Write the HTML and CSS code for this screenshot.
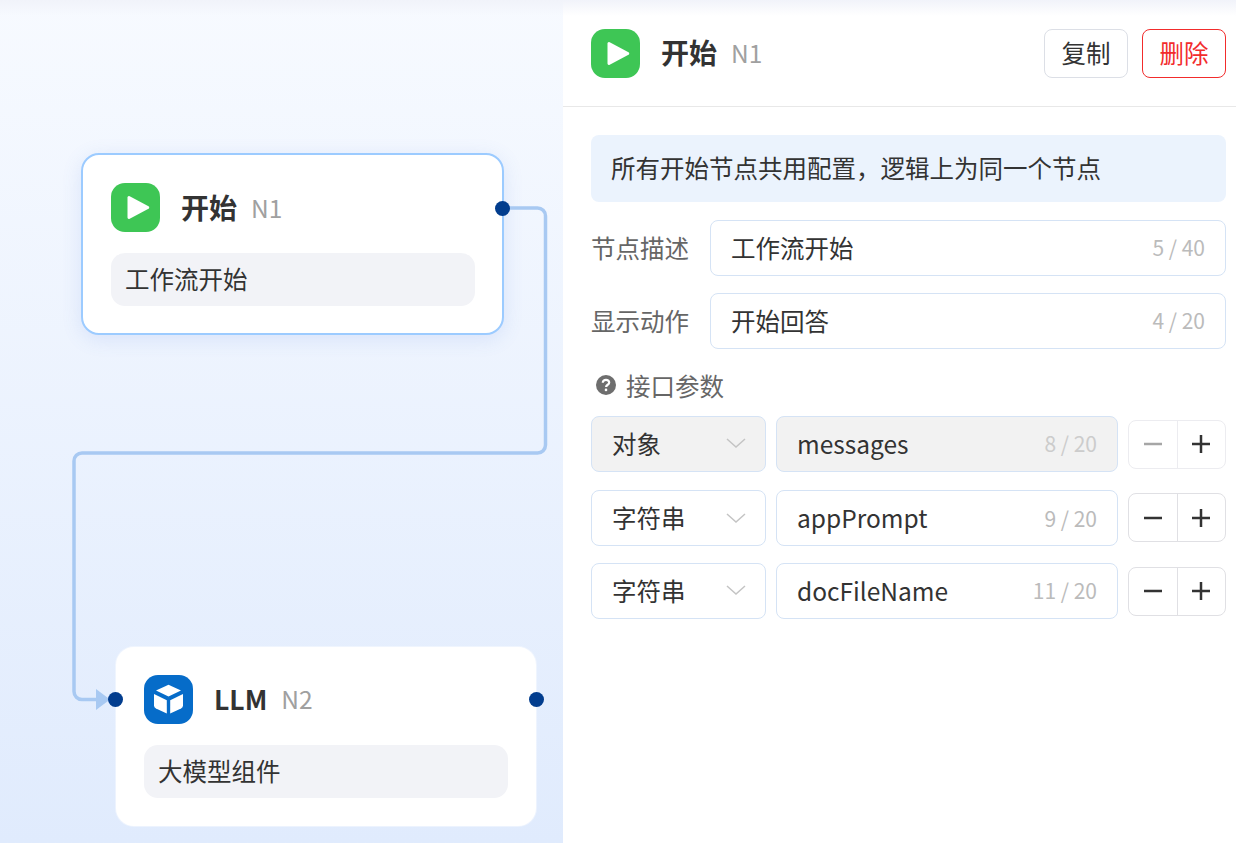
FILE: index.html
```html
<!DOCTYPE html>
<html lang="zh-CN">
<head>
<meta charset="utf-8">
<title>开始 N1</title>
<link rel="stylesheet" href="styles.css">
</head>
<body>
<div class="app">
  <section class="canvas">
    <svg class="edges" width="563" height="843" viewBox="0 0 563 843">
      <path class="edge" d="M503 208H537.500a8 8 0 0 1 8 8V445a8 8 0 0 1-8 8H82a8 8 0 0 0-8 8V691.500a8 8 0 0 0 8 8H98"/>
      <path class="arrow" d="M96 689L110 699.500L96 710Z"/>
    </svg>
    <article class="node node-start">
      <header class="node-head">
        <span class="icon icon-green"><svg width="49" height="49" viewBox="0 0 49 49"><path class="glyph" d="M16.500 14.500a1.500 1.500 0 0 1 2.200-1.300L37.500 23.200a1.500 1.500 0 0 1 0 2.600L18.700 35.800a1.500 1.500 0 0 1-2.200-1.300Z"/></svg></span>
        <h2 class="node-title">开始</h2><span class="node-id">N1</span>
      </header>
      <div class="node-desc">工作流开始</div>
      <span class="port port-right"></span>
    </article>
    <article class="node node-llm">
      <header class="node-head">
        <span class="icon icon-blue"><svg width="49" height="49" viewBox="0 0 49 49"><path class="glyph" d="M24.500 9.800L37 15.500L24.500 21.500L12 15.500Z"/><path class="glyph" d="M10 19L22.800 25.300V38.500L12 33.500Q10 32.500 10 30.500Z"/><path class="glyph" d="M39 19L26.200 25.300V38.500L37 33.500Q39 32.500 39 30.500Z"/></svg></span>
        <h2 class="node-title node-title-latin">LLM</h2><span class="node-id">N2</span>
      </header>
      <div class="node-desc">大模型组件</div>
      <span class="port port-left"></span>
      <span class="port port-right"></span>
    </article>
  </section>
  <aside class="panel">
    <header class="panel-head">
      <span class="icon icon-green"><svg width="49" height="49" viewBox="0 0 49 49"><path class="glyph" d="M16.500 14.500a1.500 1.500 0 0 1 2.200-1.300L37.500 23.200a1.500 1.500 0 0 1 0 2.600L18.700 35.800a1.500 1.500 0 0 1-2.200-1.300Z"/></svg></span>
      <h1 class="node-title">开始</h1><span class="node-id">N1</span>
      <div class="head-actions">
        <button class="btn">复制</button>
        <button class="btn btn-danger">删除</button>
      </div>
    </header>
    <div class="panel-body">
      <p class="notice">所有开始节点共用配置，逻辑上为同一个节点</p>
      <div class="field">
        <label class="field-label">节点描述</label>
        <div class="input grow"><span class="value">工作流开始</span><span class="count">5 / 40</span></div>
      </div>
      <div class="field">
        <label class="field-label">显示动作</label>
        <div class="input grow"><span class="value">开始回答</span><span class="count">4 / 20</span></div>
      </div>
      <div class="section-label">
        <svg width="20" height="20" viewBox="0 0 20 20"><circle class="help-bg" cx="10" cy="10" r="10"/><path class="help-mark" d="M6.800 7.800C6.800 5.900 8.200 4.800 10 4.800C11.900 4.800 13.200 5.900 13.200 7.500C13.200 9.800 10.100 9.700 10.100 12"/><circle class="help-dot" cx="10" cy="14.900" r="1.300"/></svg>
        <span>接口参数</span>
      </div>
      <div class="params">
        <div class="param">
          <div class="input select disabled"><span class="value">对象</span><svg class="chev" width="20" height="10" viewBox="0 0 20 10"><path d="M1 1L10 9L19 1"/></svg></div>
          <div class="input name disabled"><span class="value">messages</span><span class="count">8 / 20</span></div>
          <div class="stepper stepper-muted"><span class="step off"><svg width="20" height="20" viewBox="0 0 20 20"><path d="M1 10H19"/></svg></span><span class="step"><svg width="20" height="20" viewBox="0 0 20 20"><path d="M1 10H19M10 1V19"/></svg></span></div>
        </div>
        <div class="param">
          <div class="input select"><span class="value">字符串</span><svg class="chev" width="20" height="10" viewBox="0 0 20 10"><path d="M1 1L10 9L19 1"/></svg></div>
          <div class="input name"><span class="value">appPrompt</span><span class="count">9 / 20</span></div>
          <div class="stepper"><span class="step"><svg width="20" height="20" viewBox="0 0 20 20"><path d="M1 10H19"/></svg></span><span class="step"><svg width="20" height="20" viewBox="0 0 20 20"><path d="M1 10H19M10 1V19"/></svg></span></div>
        </div>
        <div class="param">
          <div class="input select"><span class="value">字符串</span><svg class="chev" width="20" height="10" viewBox="0 0 20 10"><path d="M1 1L10 9L19 1"/></svg></div>
          <div class="input name"><span class="value">docFileName</span><span class="count">11 / 20</span></div>
          <div class="stepper"><span class="step"><svg width="20" height="20" viewBox="0 0 20 20"><path d="M1 10H19"/></svg></span><span class="step"><svg width="20" height="20" viewBox="0 0 20 20"><path d="M1 10H19M10 1V19"/></svg></span></div>
        </div>
      </div>
    </div>
  </aside>
  <div class="top-shade"></div>
</div>
</body>
</html>
```
FILE: styles.css
```css
* { box-sizing: border-box; }
html, body { margin: 0; height: 100%; }
body {
  font-family: "Noto Sans CJK SC", "Noto Sans", sans-serif;
  color: #333;
  overflow: hidden;
  background: #fff;
}
.app { position: relative; display: flex; width: 1236px; height: 843px; overflow: hidden; }
.top-shade {
  position: absolute; left: 0; right: 0; top: 0; height: 16px;
  background: linear-gradient(#f1f3fa, rgba(255,255,255,0));
  pointer-events: none;
}
.canvas {
  position: relative; flex: 0 0 563px; height: 843px;
  background: linear-gradient(180deg, #f7faff 0%, #e0ebfd 100%);
}
.edges { position: absolute; left: 0; top: 0; z-index: 2; pointer-events: none; }
.edge { fill: none; stroke: #a8c9f2; stroke-width: 3.500; }
.arrow { fill: #a8c9f2; }
.node {
  position: absolute; display: flex; flex-direction: column;
  background: #fff; border-radius: 18px; padding: 28px 28px 0;
}
.node-start {
  left: 81px; top: 153px; width: 423px; height: 182px; padding-right: 27px;
  border: 2px solid #9ccbff;
  box-shadow: 0 4px 20px rgba(80,120,220,.14);
}
.node-llm {
  left: 116px; top: 647px; width: 420px; height: 179px;
  box-shadow: 0 0 0 1px rgba(255,255,255,.4);
}
.node-head { display: flex; align-items: center; height: 49px; }
.icon { flex: none; width: 49px; height: 49px; border-radius: 14px; display: block; }
.icon svg { display: block; }
.icon-green { background: #3ec655; }
.icon-blue { background: #066cc9; }
.glyph { fill: #fff; }
.node-title { margin: 0 0 0 21px; padding-bottom: 2px; font-size: 28px; font-weight: 600; line-height: 47px; color: #333; }
.node-title-latin { font-size: 26.500px; }
.node-id { margin-left: 14px; padding-bottom: 2px; font-size: 24.500px; line-height: 47px; color: #a0a0a0; }
.node-start .node-title, .node-start .node-id { padding-bottom: 0; line-height: 49px; }
.node-desc {
  margin-top: 21px; height: 53px; padding: 0 14px; line-height: 51px;
  background: #f2f3f7; border-radius: 14px; font-size: 24.500px; color: #333;
}
.port {
  position: absolute; width: 15px; height: 15px; border-radius: 50%;
  background: #023d8e; z-index: 3; top: 45px;
}
.node-start .port { top: 46px; }
.node-start .port-right { right: -8px; }
.node-llm .port-left { left: -8px; }
.node-llm .port-right { right: -8px; }
.panel { flex: 1; min-width: 0; background: #fff; display: flex; flex-direction: column; }
.panel-head {
  display: flex; align-items: center; height: 107px; flex: none;
  padding: 0 10px 0 28px; border-bottom: 1px solid #e8e8e8;
}
.head-actions { margin-left: auto; display: flex; gap: 14px; }
.btn {
  width: 84px; height: 49px; padding: 0; background: #fff; border: 1px solid #dcdfe6;
  border-radius: 8px; font: inherit; font-size: 24.500px; line-height: 1; color: #333;
}
.btn-danger { color: #f22c2c; border-color: #f22c2c; }
.panel-body { padding: 28px 10px 0 28px; }
.notice {
  margin: 0; height: 67px; line-height: 65px; padding: 0 20px; background: #ebf3fd;
  border-radius: 8px; font-size: 24.500px; color: #333;
}
.field { display: flex; align-items: center; height: 56px; margin-top: 17px; }
.notice + .field { margin-top: 18px; }
.field-label { flex: 0 0 119px; padding-bottom: 2px; font-size: 24.500px; color: #666; }
.input {
  display: flex; align-items: center; height: 56px; padding: 0 20px 2px;
  border: 1px solid #d5e3f5; border-radius: 8px; background: #fff; font-size: 24.500px;
}
.grow { flex: 1; min-width: 0; }
.value { color: #333; }
.count { margin-left: auto; font-size: 21px; color: #bbb; }
.section-label { display: flex; align-items: center; gap: 10px; height: 28px; margin-top: 22px; padding-left: 5px; font-size: 24.500px; color: #666; }
.help-bg { fill: #6e6e6e; }
.help-mark { fill: none; stroke: #fff; stroke-width: 2.200; }
.help-dot { fill: #fff; }
.params { display: flex; flex-direction: column; gap: 17.900px; margin-top: 17px; }
.param { display: flex; align-items: center; gap: 10px; }
.param:nth-child(2) .input { padding-bottom: 0; }
.param + .param + .param { margin-top: -0.600px; }
.select { flex: 0 0 175px; }
.name { flex: 0 0 342px; }
.disabled { background: #f2f2f2; }
.disabled .count { color: #ccc; }
.chev { margin-left: auto; margin-right: -1px; fill: none; }
.chev path { fill: none; stroke: #c4c4c4; stroke-width: 1.500; }
.stepper { display: flex; width: 98px; height: 49px; border: 1px solid #e0e0e4; border-radius: 8px; overflow: hidden; }
.stepper-muted { border-color: #ececf0; }
.step { flex: 1; display: flex; align-items: center; justify-content: center; }
.step + .step { border-left: 1px solid #e0e0e4; }
.stepper-muted .step + .step { border-left-color: #ececf0; }
.step path { fill: none; stroke: #333; stroke-width: 2.500; }
.step.off path { stroke: #a6a6a6; }
```
